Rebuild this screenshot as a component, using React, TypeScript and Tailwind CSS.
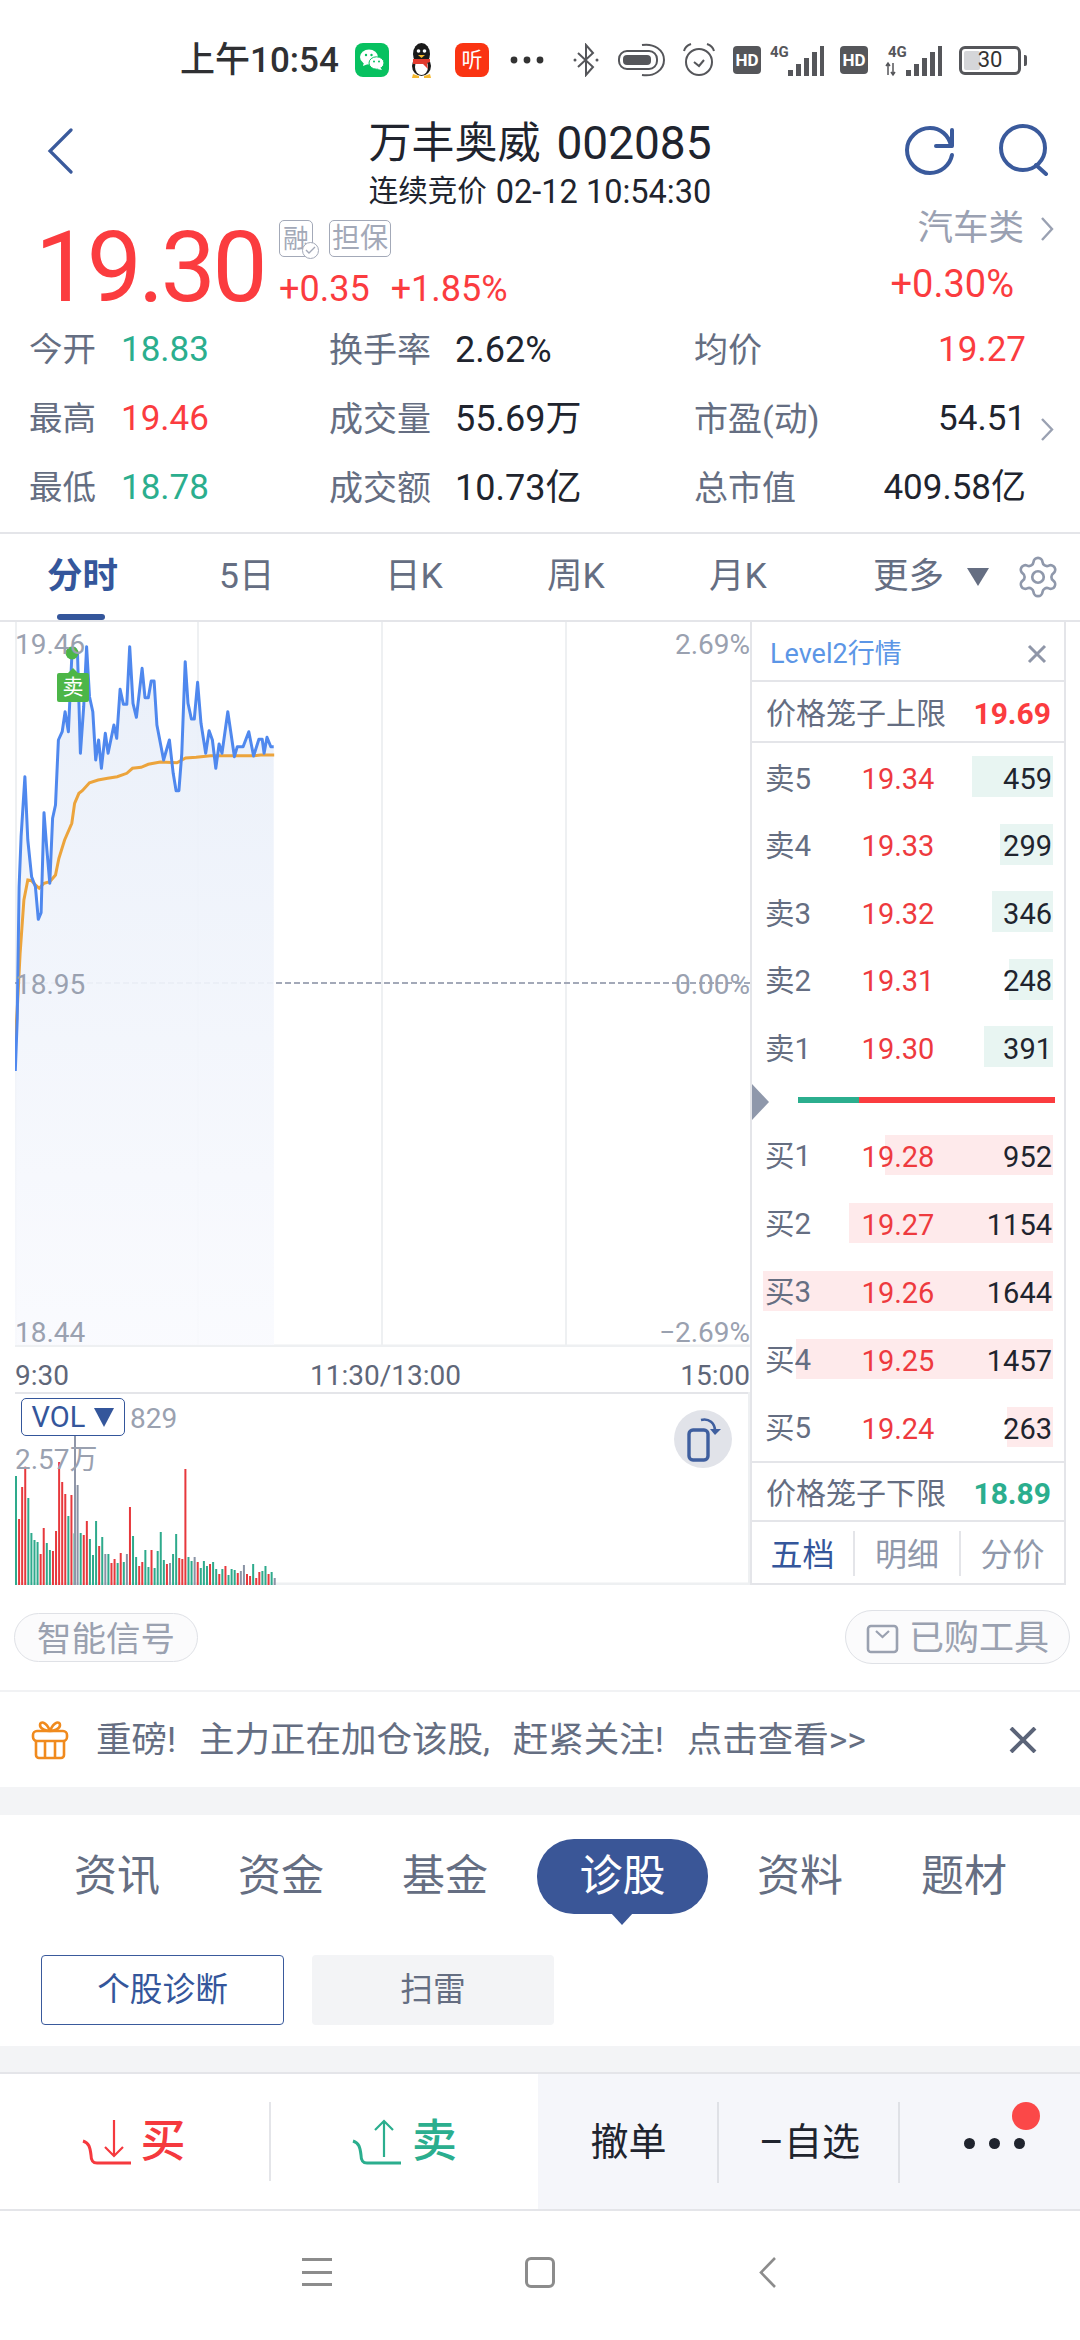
import React from "react";
import { Settings } from "lucide-react";

const blue: [number, number][] = [[32,1653],[36,1500],[40,1100],[44,950],[52,770],[58,960],[66,1070],[74,1100],[80,1198],[86,1178],[92,878],[98,990],[104,1090],[110,895],[116,855],[122,660],[130,635],[136,575],[143,635],[150,410],[156,385],[162,400],[168,700],[175,560],[181,380],[187,530],[194,575],[200,720],[206,660],[212,745],[220,640],[226,700],[238,615],[244,655],[251,508],[258,553],[265,553],[271,380],[278,550],[285,592],[297,445],[303,533],[310,533],[316,483],[322,483],[328,615],[342,720],[354,660],[362,760],[368,812],[374,812],[380,700],[387,425],[393,550],[400,597],[406,597],[413,487],[420,610],[430,700],[437,632],[444,660],[451,745],[458,672],[464,700],[476,575],[490,710],[496,680],[508,680],[520,635],[530,708],[541,658],[548,658],[552,700],[558,652],[566,680],[572,680]];
const orange: [number, number][] = [[32,1560],[36,1470],[42,1300],[50,1140],[58,1080],[66,1082],[74,1095],[82,1105],[92,1090],[104,1085],[116,1065],[123,1015],[135,960],[150,910],[156,850],[165,820],[172,812],[187,788],[205,780],[225,775],[245,770],[265,760],[277,745],[295,742],[310,733],[335,726],[370,728],[388,714],[410,712],[440,707],[530,707],[545,705],[573,705]];
const mapPts = (a: [number, number][]) => a.map(([x, y]) => `${(x / 2.09 - 15).toFixed(1)},${(520 + y / 3 - 622).toFixed(1)}`).join(" ");

const G = "#2eaa8c", R = "#e7383c", H = "#8a93a5";
const vols: [number, string][] = [[558,G],[687,R],[591,R],[530,R],[624,G],[729,G],[750,G],[756,G],[792,R],[714,R],[759,G],[780,G],[783,R],[723,R],[516,R],[576,R],[612,R],[678,G],[615,R],[730,G],[585,H],[729,G],[735,R],[693,R],[747,G],[795,G],[693,G],[768,R],[741,G],[792,H],[792,G],[819,R],[807,R],[819,G],[789,R],[816,G],[792,H],[651,R],[738,G],[801,G],[828,R],[816,R],[780,G],[831,G],[780,R],[834,G],[783,G],[726,G],[810,G],[822,R],[819,H],[792,G],[732,G],[804,R],[807,R],[537,R],[801,G],[813,G],[801,H],[816,R],[834,G],[813,G],[828,G],[822,R],[816,G],[837,G],[852,R],[837,G],[828,R],[855,G],[837,G],[840,G],[849,R],[843,H],[825,H],[852,R],[858,R],[822,G],[864,R],[846,R],[843,G],[828,G],[852,R],[846,G],[864,H]];

const sells = [["卖5","19.34","459",81],["卖4","19.33","299",53],["卖3","19.32","346",61],["卖2","19.31","248",44],["卖1","19.30","391",69]] as const;
const buys = [["买1","19.28","952",168],["买2","19.27","1154",204],["买3","19.26","1644",290],["买4","19.25","1457",257],["买5","19.24","263",46]] as const;

function Row({ d, sell }: { d: readonly [string, string, string, number]; sell: boolean }) {
  return (
    <div className={sell ? "relative h-[67.5px] flex items-center pt-[5px] pl-[13px] pr-[12px]" : "relative h-[68px] flex items-center pt-[5px] pl-[13px] pr-[12px]"}>
      <div className={sell ? "absolute right-[11px] top-[13px] h-[41px] bg-[#e8f5f2]" : "absolute right-[11px] top-[14px] h-[40px] bg-[#feeaeb]"} style={{ width: d[3] }} />
      <span className="relative w-[80px] text-[29.5px] leading-none text-[#656e82]">{d[0]}</span>
      <span className="relative w-[106px] text-center text-[29px] leading-none text-[#ee3a3e]">{d[1]}</span>
      <span className="relative flex-1 text-right text-[29px] leading-none text-[#20242e]">{d[2]}</span>
    </div>
  );
}

function HD() {
  return <div className="ml-0 w-[28px] h-[28px] rounded-[4px] bg-[#55565a] text-white text-[17px] font-bold leading-none flex items-center justify-center">HD</div>;
}

function Signal({ w, arrows }: { w: number; arrows?: boolean }) {
  const x0 = w - 54;
  return (
    <svg width={w} height={34} viewBox={`0 0 ${w} 34`}>
      <text x={x0 + 0} y={14} fontSize={15} fontWeight={700} fill="#55565a" fontFamily="Roboto">4G</text>
      {arrows && <path d="M3 20v12M1 23l2-3 2 3M8 32V20M6 29l2 3 2-3" stroke="#55565a" strokeWidth={1.5} fill="none" />}
      {[0, 1, 2, 3, 4].map((i) => (
        <rect key={i} x={w - 36 + i * 8} y={30 - i * 6 - 3} width={5} height={i * 6 + 6} fill="#55565a" />
      ))}
    </svg>
  );
}

function StatusBar() {
  return (
    <div className="h-[90px] pt-[30px]">
      <div className="h-[60px] flex items-center pl-[180px]">
        <span className="w-[158px] text-[35px] font-medium leading-none text-[#2f3033] whitespace-nowrap">上午10:54</span>
        <div className="ml-[17px] w-[34px] h-[34px] rounded-[8px] bg-[#07c160] flex items-center justify-center">
          <svg width={28} height={28} viewBox="0 0 28 28">
            <ellipse cx={11} cy={11} rx={9} ry={7.5} fill="#fff" />
            <path d="M6 16l-1 4 5-2z" fill="#fff" />
            <ellipse cx={18.5} cy={17} rx={7.5} ry={6.2} fill="#fff" stroke="#07c160" strokeWidth={1} />
            <path d="M22 21l2 3-5-1z" fill="#fff" />
            <circle cx={8} cy={9} r={1.2} fill="#07c160" /><circle cx={13.5} cy={9} r={1.2} fill="#07c160" />
            <circle cx={16} cy={15.5} r={1} fill="#07c160" /><circle cx={21} cy={15.5} r={1} fill="#07c160" />
          </svg>
        </div>
        <svg className="ml-[17px]" width={31} height={36} viewBox="0 0 31 36">
          <ellipse cx={15.5} cy={12} rx={8.5} ry={11} fill="#1a1a1a" />
          <ellipse cx={15.5} cy={24} rx={9.5} ry={10} fill="#1a1a1a" />
          <ellipse cx={15.5} cy={25} rx={6.5} ry={8} fill="#fff" />
          <path d="M7 17h17v3l-3 1 1 6-5-5H7z" fill="#e23b2e" />
          <circle cx={12.5} cy={9} r={1.8} fill="#fff" /><circle cx={18.5} cy={9} r={1.8} fill="#fff" />
          <path d="M12 13h7l-3.5 3z" fill="#f5b82e" />
          <path d="M7 32l6 2v2H6zM24 32l-6 2v2h7z" fill="#f5b82e" />
        </svg>
        <div className="ml-[18px] w-[34px] h-[34px] rounded-[8px] bg-[#fa3412] text-white text-[21px] leading-none flex items-center justify-center">听</div>
        <svg className="ml-[21px]" width={34} height={10} viewBox="0 0 34 10">
          <circle cx={4} cy={5} r={3.4} fill="#333" /><circle cx={17} cy={5} r={3.4} fill="#333" /><circle cx={30} cy={5} r={3.4} fill="#333" />
        </svg>
        <svg className="ml-[28px]" width={28} height={34} viewBox="0 0 28 34" fill="none" stroke="#55565a" strokeWidth={2}>
          <path d="M6 10l15 14-7 8V2l7 8L6 24" />
          <circle cx={3} cy={17} r={1.5} fill="#55565a" stroke="none" /><circle cx={25} cy={17} r={1.5} fill="#55565a" stroke="none" />
        </svg>
        <svg className="ml-[18px]" width={48} height={34} viewBox="0 0 48 34" fill="none" stroke="#55565a" strokeWidth={2}>
          <rect x={1} y={8} width={38} height={18} rx={8} />
          <rect x={5} y={12} width={28} height={10} rx={4} fill="#55565a" stroke="none" />
          <path d="M24 2c12-2 22 5 22 15s-10 17-22 15" />
        </svg>
        <svg className="ml-[16px]" width={34} height={36} viewBox="0 0 34 36" fill="none" stroke="#55565a" strokeWidth={2}>
          <circle cx={17} cy={20} r={13} />
          <path d="M12 20l5 4 5-6" />
          <path d="M2 9c1-4 4-6 7-7M32 9c-1-4-4-6-7-7" />
        </svg>
        <div className="ml-[17px]"><HD /></div>
        <div className="ml-[9px]"><Signal w={54} /></div>
        <div className="ml-[16px]"><HD /></div>
        <div className="ml-[17px]"><Signal w={57} arrows /></div>
        <div className="ml-[17px] relative w-[62px] h-[29px] rounded-[6px] border-[3px] border-[#55565a] flex items-center justify-center">
          <div className="absolute left-[2px] top-[2px] bottom-[2px] w-[16px] bg-[#d5d6d9] rounded-[2px]" />
          <span className="relative text-[22px] leading-none text-[#333]">30</span>
          <div className="absolute -right-[9px] top-[6px] w-[3px] h-[11px] bg-[#55565a] rounded-r-[2px]" />
        </div>
      </div>
    </div>
  );
}

function Header() {
  return (
    <div className="h-[120px] grid grid-cols-[1fr_auto_1fr] items-start">
      <div className="pl-[47px] pt-[38px]">
        <svg width={26} height={46} viewBox="0 0 26 46" fill="none" stroke="#3a5a9c" strokeWidth={3.2} strokeLinecap="round"><path d="M24 2L3 23l21 21" /></svg>
      </div>
      <div className="flex flex-col items-center text-[#20242e]">
        <div className="h-[84px] pt-[22px] flex items-center whitespace-nowrap text-[43px] leading-none">
          万丰奥威<span className="ml-[16px] text-[46px]">002085</span>
        </div>
        <div className="h-[36px] flex items-center whitespace-nowrap text-[29.5px] leading-none">
          连续竞价<span className="ml-[9px] text-[32.5px]">02-12 10:54:30</span>
        </div>
      </div>
      <div className="flex justify-end pr-[30px] pt-[34px] gap-[42px]">
        <svg width={52} height={52} viewBox="0 0 52 52" fill="none" stroke="#3a5a9c" strokeWidth={4} strokeLinecap="round" strokeLinejoin="round">
          <path d="M47 22C45 11 36 4 26 4 14 4 3 14 3 26s10 23 23 23c11 0 20-8 22-18" />
          <path d="M48 6v16H32" />
        </svg>
        <svg width={52} height={52} viewBox="0 0 52 52" fill="none" stroke="#3a5a9c" strokeWidth={4} strokeLinecap="round">
          <circle cx={25} cy={24} r={22} />
          <path d="M38 41l10 9" />
        </svg>
      </div>
    </div>
  );
}

function Quote() {
  return (
    <div className="h-[105px] flex">
      <div className="pl-[35px] w-[279px] pt-[11px] text-[98px] leading-[94px] tracking-[-3.4px] text-[#fb3c3f]">19.30</div>
      <div className="flex-1 flex flex-col pt-[10px]">
        <div className="flex gap-[16px] h-[37px]">
          <div className="relative w-[34px] h-[37px] rounded-[5px] border border-[#a3a9b8] text-[#a3a9b8] text-[26px] leading-none flex items-center justify-center">
            融
            <div className="absolute -right-[7px] -bottom-[3px] w-[17px] h-[17px] rounded-full bg-white border border-[#a3a9b8] flex items-center justify-center">
              <svg width={11} height={9} viewBox="0 0 11 9" fill="none" stroke="#a3a9b8" strokeWidth={1.4}><path d="M1 4l3 3 6-6" /></svg>
            </div>
          </div>
          <div className="w-[62px] h-[37px] rounded-[5px] border border-[#a3a9b8] text-[#a3a9b8] text-[28px] leading-none flex items-center justify-center whitespace-nowrap">担保</div>
        </div>
        <div className="mt-[17px] flex gap-[21px] text-[36px] leading-[30px] text-[#fb3c3f]"><span>+0.35</span><span>+1.85%</span></div>
      </div>
      <div className="w-[200px] pr-[26px] flex flex-col items-end">
        <div className="flex items-center h-[36px] mt-[1px] text-[#9aa1b2] text-[35.5px] leading-none">
          汽车类
          <svg className="ml-[16px]" width={14} height={26} viewBox="0 0 14 26" fill="none" stroke="#9aa1b2" strokeWidth={2.4}><path d="M2 2l10 11L2 24" /></svg>
        </div>
        <div className="mt-[22px] pr-[40px] text-[38px] leading-[30px] text-[#fb3c3f]">+0.30%</div>
      </div>
    </div>
  );
}

function Stat({ a, b, c, d, e, f, cc, fc, arrow }: { a: string; b: string; c: string; d: string; e: string; f: string; cc?: string; fc?: string; arrow?: boolean }) {
  return (
    <div className="relative h-[69px] flex items-center pl-[29px] leading-none">
      <span className="w-[92px] text-[33.5px] text-[#656e82]">{a}</span>
      <span className={(cc || "") + " w-[208px] text-[35px]"}>{b}</span>
      <span className="w-[126px] text-[34px] text-[#656e82]">{c}</span>
      <span className="w-[239px] text-[36px] text-[#20242e]">{d}</span>
      <span className="text-[34px] text-[#656e82] whitespace-nowrap">{e}</span>
      <span className={(fc || "text-[#20242e]") + " absolute right-[54px] text-[35px]"}>{f}</span>
      {arrow && (
        <svg className="absolute left-[1040px] top-[33px]" width={14} height={25} viewBox="0 0 14 25" fill="none" stroke="#9aa1b2" strokeWidth={2.4}><path d="M2 2l10 10.5L2 23" /></svg>
      )}
    </div>
  );
}

function Tabs() {
  return (
    <div className="relative h-[90px] border-y-2 border-[#e4e5e9] flex items-center text-[35.5px] leading-none text-[#656e82]">
      <span className="absolute left-[47px] font-bold text-[#34569b]">分时</span>
      <div className="absolute left-[57px] bottom-0 w-[48px] h-[6px] rounded-[3px] bg-[#34569b]" />
      <span className="absolute left-[219px]">5日</span>
      <span className="absolute left-[385px]">日K</span>
      <span className="absolute left-[547px]">周K</span>
      <span className="absolute left-[709px]">月K</span>
      <span className="absolute left-[873px]">更多</span>
      <div className="absolute left-[967px] top-[34px] w-0 h-0 border-x-[11px] border-x-transparent border-t-[18px] border-t-[#656e82]" />
      <Settings className="absolute left-[1015px] top-[20px]" size={46} strokeWidth={1.4} color="#8f98ab" />
    </div>
  );
}

function MainChart() {
  const line = mapPts(blue);
  const fill = `${line} 259,723 0,723`;
  return (
    <div className="relative w-[735px] h-[725px]">
      <svg className="block" width={735} height={725} viewBox="0 0 735 725">
        <defs>
          <linearGradient id="gf" x1="0" y1="0" x2="0" y2="1">
            <stop offset="0" stopColor="#e9eff9" stopOpacity={0.95} />
            <stop offset="1" stopColor="#f9fafe" stopOpacity={0.9} />
          </linearGradient>
        </defs>
        {[1, 183, 367, 551].map((x) => <line key={x} x1={x} x2={x} y1={0} y2={725} stroke="#eef0f2" strokeWidth={2} />)}
        <line x1={0} x2={735} y1={724} y2={724} stroke="#eef0f2" strokeWidth={3} />
        <line x1={0} x2={735} y1={361} y2={361} stroke="#a3a9b8" strokeWidth={2} strokeDasharray="6 3" />
        <polygon points={fill} fill="url(#gf)" />
        <polyline points={mapPts(orange)} fill="none" stroke="#eca43c" strokeWidth={3} />
        <polyline points={line} fill="none" stroke="#4f88ee" strokeWidth={3} strokeLinejoin="round" />
        <circle cx={57} cy={31} r={6.5} fill="#4cb648" />
      </svg>
      <div className="absolute left-0 top-[10px] text-[28px] leading-[26px] text-[#9aa1b0]">19.46</div>
      <div className="absolute right-0 top-[10px] text-[28px] leading-[26px] text-[#9aa1b0]">2.69%</div>
      <div className="absolute left-0 top-[350px] text-[28px] leading-[26px] text-[#9aa1b0]">18.95</div>
      <div className="absolute right-0 top-[350px] text-[28px] leading-[26px] text-[#9aa1b0]">0.00%</div>
      <div className="absolute left-0 top-[698px] text-[28px] leading-[26px] text-[#9aa1b0]">18.44</div>
      <div className="absolute right-0 top-[698px] text-[28px] leading-[26px] text-[#9aa1b0]">−2.69%</div>
      <div className="absolute left-[42px] top-[51px] w-[32px] h-[29px] rounded-[2px] bg-[#4cb648] text-white text-[21px] leading-none flex items-center justify-center">
        <div className="absolute -top-[5px] left-[11px] w-0 h-0 border-x-[5px] border-x-transparent border-b-[5px] border-b-[#4cb648]" />
        卖
      </div>
    </div>
  );
}

function VolChart() {
  return (
    <div className="relative w-[735px] h-[193px] border-t-2 border-[#e4e5e9]">
      <svg className="absolute left-0 -top-[2px]" width={735} height={193} viewBox="0 0 735 193">
        <line x1={0} x2={735} y1={192} y2={192} stroke="#eef0f2" strokeWidth={3} />
        <line x1={734} x2={734} y1={0} y2={193} stroke="#eef0f2" strokeWidth={2} />
        {vols.map(([t, c], i) => {
          const y = 1290 + t / 3 - 1392;
          return <rect key={i} x={i * 3.08} y={y} width={2} height={193 - y} fill={c} />;
        })}
        <line x1={60} x2={60} y1={44} y2={193} stroke="#8f96a8" strokeWidth={2} />
      </svg>
      <div className="absolute left-[6px] top-[4px] w-[104px] h-[38px] rounded-[5px] border border-[#34569b] bg-white flex items-center justify-center text-[29px] leading-none text-[#34569b]">
        VOL
        <div className="ml-[9px] w-0 h-0 border-x-[10px] border-x-transparent border-t-[19px] border-t-[#34569b]" />
      </div>
      <div className="absolute left-[115px] top-[12px] text-[28px] leading-[26px] text-[#9aa1b0]">829</div>
      <div className="absolute left-0 top-[53px] text-[28px] leading-[26px] text-[#9aa1b0]">2.57万</div>
      <div className="absolute left-[659px] top-[16px] w-[58px] h-[58px] rounded-full bg-[#e1e3e9] flex items-center justify-center">
        <svg width={40} height={46} viewBox="0 0 40 46" fill="none" stroke="#3f5f9f" strokeWidth={3.4}>
          <rect x={6} y={14} width={19} height={30} rx={4} />
          <path d="M18 4c8-2 14 3 14 11" strokeWidth={2.6} />
          <path d="M27 13l5 6 6-6z" fill="#3f5f9f" stroke="none" />
        </svg>
      </div>
    </div>
  );
}

function Panel() {
  return (
    <div className="w-[316px] h-[963px] border-x-2 border-[#e4e5e9] flex flex-col">
      <div className="h-[60px] flex items-center justify-between pt-[6px] pl-[18px] pr-[17px] border-b-2 border-[#e4e5e9]">
        <span className="text-[27px] leading-none text-[#5c96e6] whitespace-nowrap">Level2行情</span>
        <svg width={20} height={20} viewBox="0 0 20 20" stroke="#8f96a8" strokeWidth={3}><path d="M2 2l16 16M18 2L2 18" /></svg>
      </div>
      <div className="h-[61px] flex items-center justify-between pt-[5px] pl-[14px] pr-[13px] border-b-2 border-[#e4e5e9]">
        <span className="text-[30px] leading-none text-[#656e82] whitespace-nowrap">价格笼子上限</span>
        <span className="text-[30px] font-bold leading-none text-[#fb3c3f]">19.69</span>
      </div>
      {sells.map((d) => <Row key={d[0]} d={d} sell />)}
      <div className="relative h-[40px]">
        <div className="absolute left-0 top-[3px] w-0 h-0 border-y-[18px] border-y-transparent border-l-[17px] border-l-[#8f98ab]" />
        <div className="absolute left-[46px] top-[16px] w-[61px] h-[6px] bg-[#2bae8e]" />
        <div className="absolute left-[107px] top-[16px] w-[196px] h-[6px] bg-[#fb3c3f]" />
      </div>
      {buys.map((d) => <Row key={d[0]} d={d} sell={false} />)}
      <div className="h-[61px] flex items-center justify-between pt-[5px] pl-[14px] pr-[13px] border-y-2 border-[#e4e5e9]">
        <span className="text-[30px] leading-none text-[#656e82] whitespace-nowrap">价格笼子下限</span>
        <span className="text-[30px] font-bold leading-none text-[#2bae8e]">18.89</span>
      </div>
      <div className="flex-1 flex items-center pt-[3px] text-[32px] leading-none border-b-2 border-[#e4e5e9]">
        <div className="w-[103px] h-[45px] flex items-center justify-center pt-[3px] text-[#34569b] border-r-2 border-[#e4e5e9]">五档</div>
        <div className="w-[106px] h-[45px] flex items-center justify-center pt-[3px] text-[#8f98ab] border-r-2 border-[#e4e5e9]">明细</div>
        <div className="flex-1 h-[45px] flex items-center justify-center pt-[3px] text-[#8f98ab]">分价</div>
      </div>
    </div>
  );
}

function Pills() {
  return (
    <div className="h-[105px] flex justify-between items-start pl-[14px] pr-[10px] pt-[25px]">
      <div className="mt-[3px] w-[184px] h-[49px] pt-[3px] rounded-full border border-[#dfe1e6] bg-[#fbfbfc] flex items-center justify-center text-[34.5px] leading-none text-[#9aa1b0]">智能信号</div>
      <div className="w-[225px] h-[54px] pt-[3px] rounded-full border border-[#dfe1e6] bg-[#fbfbfc] flex items-center justify-center gap-[10px] text-[35px] leading-none text-[#9aa1b0]">
        <svg width={33} height={30} viewBox="0 0 33 30" fill="none" stroke="#9aa1b0" strokeWidth={2.6}>
          <rect x={2} y={2} width={29} height={26} rx={3} />
          <path d="M10 7l6.500 6 6.500-6" strokeWidth={2.2} />
        </svg>
        已购工具
      </div>
    </div>
  );
}

function Notice() {
  return (
    <div className="h-[97px] border-t-2 border-[#f1f2f4] flex items-center pl-[31px] text-[35.5px] leading-none text-[#656e82]">
      <svg width={38} height={40} viewBox="0 0 38 40" fill="none" stroke="#f08a1d" strokeWidth={2.6} strokeLinejoin="round">
        <rect x={2} y={11} width={34} height={10} rx={4} />
        <path d="M5 21v14a3 3 0 003 3h22a3 3 0 003-3V21M14 21v17M24 21v17" />
        <path d="M19 11C15 11 9 9 9 5s6-4 10 6c4-10 10-10 10-6s-6 6-10 6z" />
      </svg>
      <span className="ml-[27px] pt-[3px] whitespace-nowrap [word-spacing:14px]">重磅! 主力正在加仓该股, 赶紧关注! 点击查看&gt;&gt;</span>
      <svg className="ml-auto mr-[43px]" width={28} height={26} viewBox="0 0 28 26" stroke="#5b6478" strokeWidth={4}><path d="M2 1l24 24M26 1L2 25" /></svg>
    </div>
  );
}

function InfoTabs() {
  return (
    <div className="h-[140px] flex items-start pt-[24px] pl-[74px] gap-[78px] text-[43px] leading-none text-[#656e82]">
      <span className="h-[75px] flex items-center">资讯</span>
      <span className="h-[75px] flex items-center">资金</span>
      <span className="h-[75px] flex items-center">基金</span>
      <div className="relative -mx-[29px] w-[171px] h-[75px] rounded-[37px] bg-[#3a5697] text-white flex items-center justify-center">
        诊股
        <div className="absolute left-[74px] top-[74px] w-0 h-0 border-x-[11px] border-x-transparent border-t-[12px] border-t-[#3a5697]" />
      </div>
      <span className="h-[75px] flex items-center">资料</span>
      <span className="h-[75px] flex items-center">题材</span>
    </div>
  );
}

function Actions() {
  return (
    <div className="h-[139px] border-y-2 border-[#e4e5e9] flex">
      <div className="w-[269px] flex items-center justify-center gap-[8px] text-[45px] font-medium leading-none text-[#f5393e] pr-[1px]">
        <svg width={50} height={46} viewBox="0 0 50 46" fill="none" stroke="#f5393e" strokeWidth={3}>
          <path d="M1 22c6 2 7 6 8 14 0 6 2 8 6 8h34" />
          <path d="M32 1v36M23 28l9 9 9-9" strokeWidth={2.2} />
        </svg>
        <span>买</span>
      </div>
      <div className="my-[28px] w-[2px] bg-[#e4e5e9]" />
      <div className="w-[267px] flex items-center justify-center gap-[10px] text-[45px] font-medium leading-none text-[#2bae8e]">
        <svg width={50} height={46} viewBox="0 0 50 46" fill="none" stroke="#2bae8e" strokeWidth={3}>
          <path d="M1 22c6 2 7 6 8 14 0 6 2 8 6 8h34" />
          <path d="M32 38V2M23 11l9-9 9 9" strokeWidth={2.2} />
        </svg>
        <span>卖</span>
      </div>
      <div className="flex-1 bg-[#f5f6fa] flex text-[38px] leading-none text-[#20242e]">
        <div className="w-[181px] relative flex items-center justify-center">撤单<div className="absolute right-0 top-[28px] bottom-[26px] w-[2px] bg-[#dfe1e6]" /></div>
        <div className="w-[181px] relative flex items-center justify-center whitespace-nowrap">–自选<div className="absolute right-0 top-[28px] bottom-[26px] w-[2px] bg-[#dfe1e6]" /></div>
        <div className="relative flex-1 flex items-center pl-[64px]">
          <div className="flex gap-[14px] pt-[4px]">
            <div className="w-[11px] h-[11px] rounded-full bg-[#20242e]" />
            <div className="w-[11px] h-[11px] rounded-full bg-[#20242e]" />
            <div className="w-[11px] h-[11px] rounded-full bg-[#20242e]" />
          </div>
          <div className="absolute left-[112px] top-[28px] w-[28px] h-[28px] rounded-full bg-[#fb4848]" />
        </div>
      </div>
    </div>
  );
}

function Nav() {
  return (
    <div className="h-[129px] flex items-start pt-[46px] pl-[302px]">
      <div className="w-[30px] h-[28px] mt-[1px] flex flex-col justify-between">
        <div className="h-[3px] bg-[#8c8c8c]" /><div className="h-[3px] bg-[#8c8c8c]" /><div className="h-[3px] bg-[#8c8c8c]" />
      </div>
      <div className="ml-[193px] w-[30px] h-[31px] rounded-[6px] border-[3px] border-[#8c8c8c]" />
      <svg className="ml-[203px]" width={19} height={31} viewBox="0 0 19 31" fill="none" stroke="#8c8c8c" strokeWidth={2.6}><path d="M17 1L3 15.500 17 30" /></svg>
    </div>
  );
}

export default function App() {
  return (
    <div className="w-[1080px] h-[2340px] overflow-hidden bg-white [font-family:Roboto,'Noto_Sans_CJK_SC',sans-serif]">
      <StatusBar />
      <Header />
      <Quote />
      <div className="pb-[10px]">
        <Stat a="今开" b="18.83" cc="text-[#2bae8e]" c="换手率" d="2.62%" e="均价" f="19.27" fc="text-[#fb3c3f]" />
        <Stat a="最高" b="19.46" cc="text-[#fb3c3f]" c="成交量" d="55.69万" e="市盈(动)" f="54.51" arrow />
        <Stat a="最低" b="18.78" cc="text-[#2bae8e]" c="成交额" d="10.73亿" e="总市值" f="409.58亿" />
      </div>
      <Tabs />
      <div className="flex">
        <div className="w-[750px] pl-[15px] flex flex-col">
          <MainChart />
          <div className="h-[45px] pt-[13px] relative flex items-center justify-between text-[28px] leading-none text-[#5f6779]">
            <span>9:30</span>
            <span className="absolute left-[295px]">11:30/13:00</span>
            <span>15:00</span>
          </div>
          <VolChart />
        </div>
        <Panel />
      </div>
      <Pills />
      <Notice />
      <div className="h-[28px] bg-[#f3f4f6]" />
      <InfoTabs />
      <div className="h-[91px] flex gap-[28px] pl-[41px] items-start text-[32.7px] leading-none">
        <div className="w-[243px] h-[70px] rounded-[4px] border-[1.5px] border-[#3a5a9c] text-[#34569b] flex items-center justify-center">个股诊断</div>
        <div className="w-[242px] h-[70px] rounded-[4px] bg-[#f3f4f6] text-[#656e82] flex items-center justify-center">扫雷</div>
      </div>
      <div className="h-[26px] bg-[#f3f4f6]" />
      <Actions />
      <Nav />
    </div>
  );
}
